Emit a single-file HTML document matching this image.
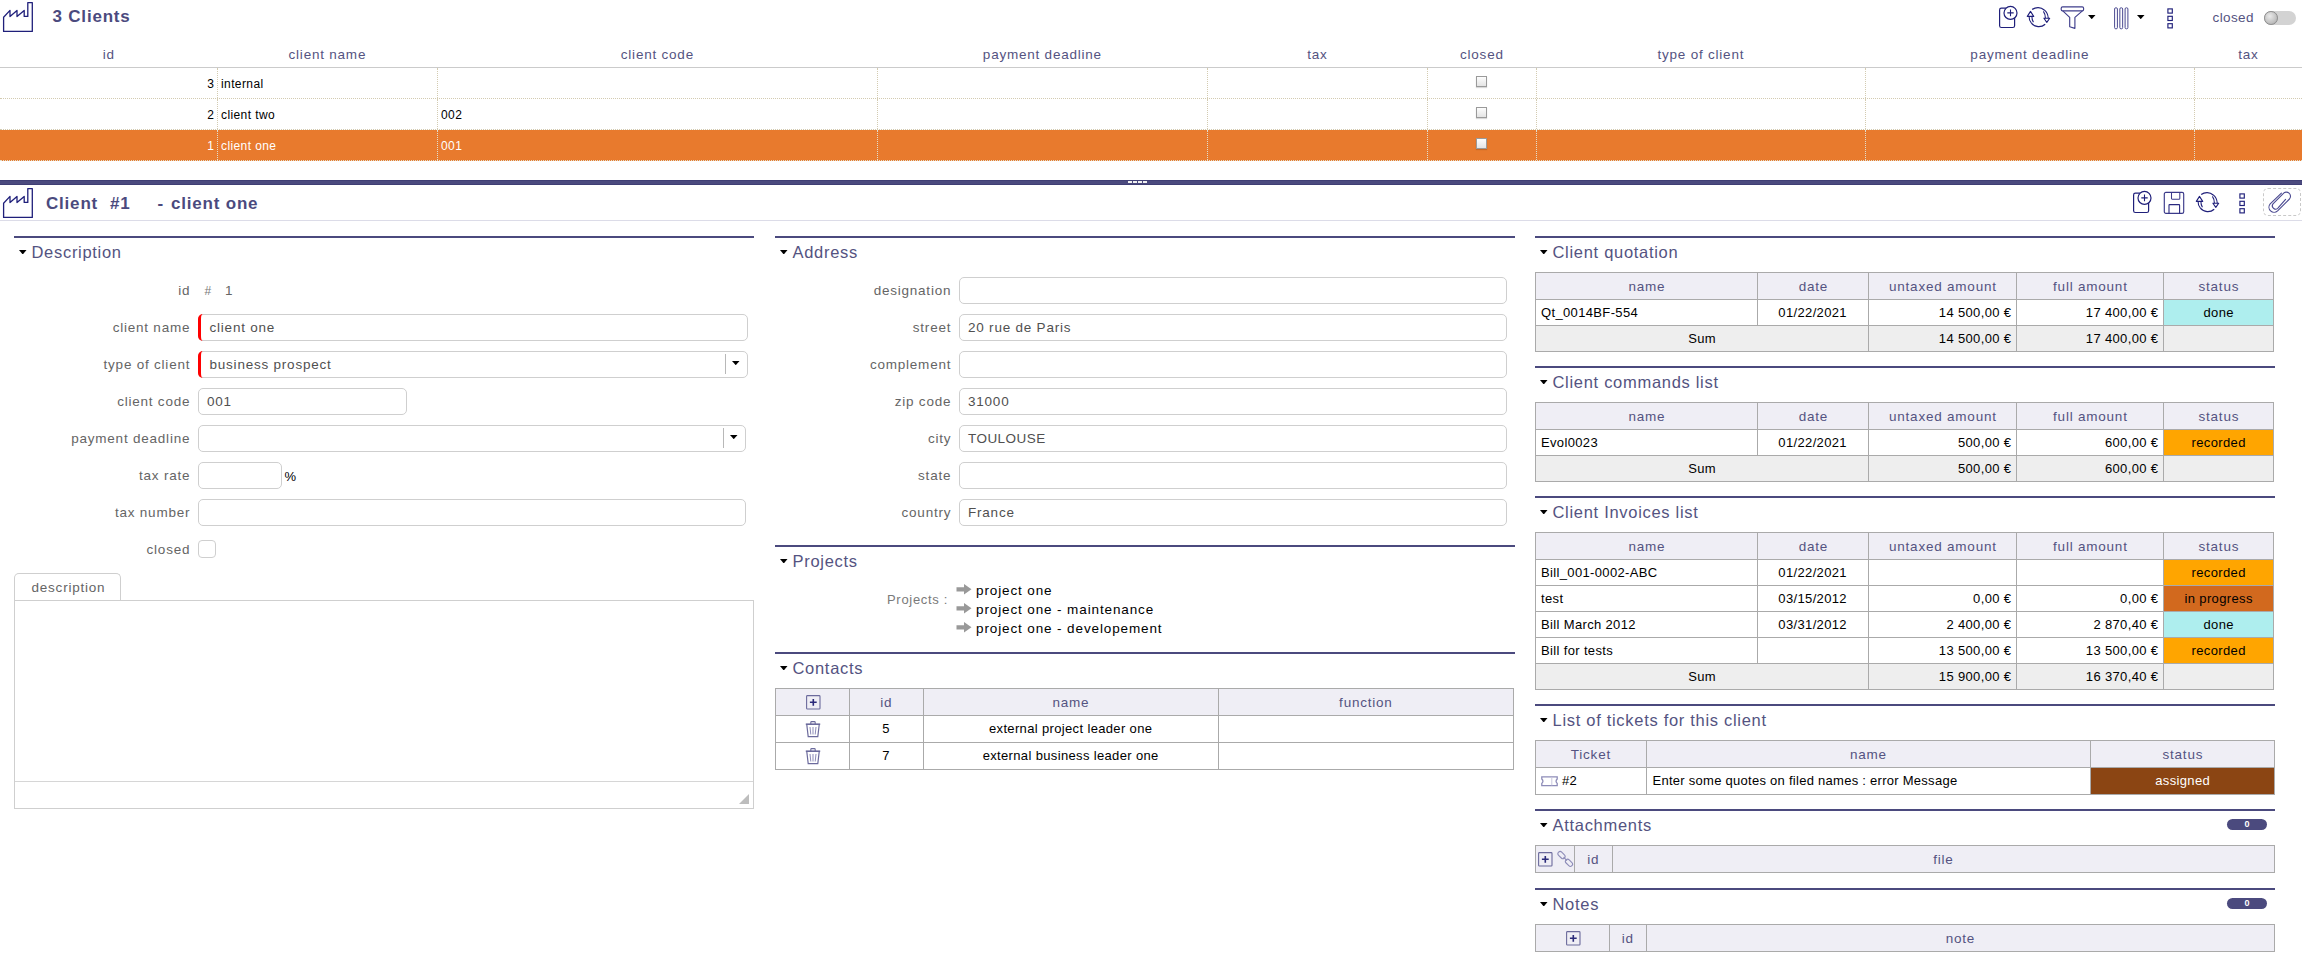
<!DOCTYPE html>
<html><head><meta charset="utf-8"><title>Clients</title>
<style>
html,body{margin:0;padding:0;}
body{width:2302px;height:972px;overflow:hidden;position:relative;background:#fff;font-family:"Liberation Sans",sans-serif;}
.t{position:absolute;white-space:pre;}
.r{position:absolute;}
</style></head><body>
<svg class="r" style="left:0px;top:0px;" width="36" height="36" viewBox="0 0 36 36"><path d="M3.6 31.4 V17.2 L10 10.4 V16.6 L17 10.4 V16.6 L24.2 10.4 V16.4 H27.8 V2.6 H32.3 V31.4 Z" fill="none" stroke="#1f1f7a" stroke-width="1.3" stroke-linejoin="round"/></svg>
<div class="t" style="top:5.71px;font-size:17px;line-height:22px;letter-spacing:0.8px;color:#4b4a7e;font-weight:700;left:52.50px;">3 Clients</div>
<svg class="r" style="left:1998px;top:2px;" width="24" height="28" viewBox="0 0 24 28">
<rect x="1.6" y="6.1" width="15" height="19.4" rx="1.8" fill="none" stroke="#1f1f7a" stroke-width="1.2"/>
<circle cx="12.5" cy="10.9" r="6.5" fill="#fff" stroke="#1f1f7a" stroke-width="1.2"/>
<path d="M12.5 7.6 V14.2 M9.3 10.9 H15.7" stroke="#1f1f7a" stroke-width="1.1"/></svg>
<svg class="r" style="left:2024.0px;top:3.0px;" width="30" height="28" viewBox="0 0 30 28">
<path d="M8.2 6.5 A9.6 9.6 0 0 1 20.2 6.9" fill="none" stroke="#1f1f7a" stroke-width="1.3"/>
<path d="M20.2 6.9 Q23.8 9.6 24.3 15.2 M19.4 8.3 Q21.4 11 21.4 15.2" fill="none" stroke="#1f1f7a" stroke-width="1.1"/>
<path d="M19.9 15.3 H25.7 L22.8 19.4 Z" fill="none" stroke="#1f1f7a" stroke-width="1.1" stroke-linejoin="round"/>
<path d="M21.2 21.3 A9.6 9.6 0 0 1 7.4 20.2" fill="none" stroke="#1f1f7a" stroke-width="1.3"/>
<path d="M7.4 20.2 Q4.9 17.6 5.1 13.4 M9.4 19.2 Q7.9 16.8 7.9 13.4" fill="none" stroke="#1f1f7a" stroke-width="1.1"/>
<path d="M3.3 13.4 H9.7 L6.5 8.4 Z" fill="none" stroke="#1f1f7a" stroke-width="1.1" stroke-linejoin="round"/></svg>
<svg class="r" style="left:2060px;top:5px;" width="26" height="26" viewBox="0 0 26 26">
<rect x="1.2" y="1.9" width="22.4" height="3.9" rx="1.4" fill="none" stroke="#3f3e8c" stroke-width="1.15"/>
<path d="M2.8 5.9 L9.7 12.4 V21.7 L14.9 23.4 V12.4 L22.4 5.9" fill="none" stroke="#3f3e8c" stroke-width="1.15" stroke-linejoin="round"/></svg>
<svg class="r" style="left:2088px;top:15px;" width="7.5" height="4.199999999999999" viewBox="0 0 7.5 4.199999999999999"><path d="M0 0 H7.5 L3.75 4.199999999999999 Z" fill="#000"/></svg>
<svg class="r" style="left:2113.5px;top:6.8px;" width="16" height="23" viewBox="0 0 16 23"><rect x="0.6" y="0.8" width="2.8" height="21" rx="1.2" fill="none" stroke="#4a4990" stroke-width="1.0"/><rect x="5.85" y="0.8" width="2.8" height="21" rx="1.2" fill="none" stroke="#4a4990" stroke-width="1.0"/><rect x="11.1" y="0.8" width="2.8" height="21" rx="1.2" fill="none" stroke="#4a4990" stroke-width="1.0"/></svg>
<svg class="r" style="left:2137px;top:15px;" width="7.5" height="4.199999999999999" viewBox="0 0 7.5 4.199999999999999"><path d="M0 0 H7.5 L3.75 4.199999999999999 Z" fill="#000"/></svg>
<svg class="r" style="left:2166.5px;top:7.6px;" width="8" height="22" viewBox="0 0 8 22"><rect x="0.9" y="0.9" width="4.4" height="4.2" fill="none" stroke="#1f1f7a" stroke-width="1.15"/><rect x="0.9" y="8.3" width="4.4" height="4.2" fill="none" stroke="#1f1f7a" stroke-width="1.15"/><rect x="0.9" y="15.700000000000001" width="4.4" height="4.2" fill="none" stroke="#1f1f7a" stroke-width="1.15"/></svg>
<div class="t" style="top:9.02px;font-size:13.5px;line-height:18px;letter-spacing:0.4px;color:#545381;left:2212.50px;">closed</div>
<div class="r" style="left:2264px;top:11px;width:32px;height:14px;background:#d3d3d3;border-radius:7px;"></div>
<div class="r" style="left:2263.8px;top:11.2px;width:11.8px;height:11.8px;border-radius:50%;border:1px solid #8c8c8c;background:radial-gradient(circle at 40% 35%,#eaeaea,#a9a9a9);"></div>
<div class="t" style="top:46.02px;font-size:13.5px;line-height:18px;letter-spacing:0.78px;color:#545381;left:0.39px;width:217px;text-align:center;">id</div>
<div class="t" style="top:46.02px;font-size:13.5px;line-height:18px;letter-spacing:0.78px;color:#545381;left:217.39px;width:220px;text-align:center;">client name</div>
<div class="t" style="top:46.02px;font-size:13.5px;line-height:18px;letter-spacing:0.78px;color:#545381;left:437.39px;width:440px;text-align:center;">client code</div>
<div class="t" style="top:46.02px;font-size:13.5px;line-height:18px;letter-spacing:0.78px;color:#545381;left:877.39px;width:330px;text-align:center;">payment deadline</div>
<div class="t" style="top:46.02px;font-size:13.5px;line-height:18px;letter-spacing:0.78px;color:#545381;left:1207.39px;width:220px;text-align:center;">tax</div>
<div class="t" style="top:46.02px;font-size:13.5px;line-height:18px;letter-spacing:0.78px;color:#545381;left:1427.39px;width:109px;text-align:center;">closed</div>
<div class="t" style="top:46.02px;font-size:13.5px;line-height:18px;letter-spacing:0.78px;color:#545381;left:1536.39px;width:329px;text-align:center;">type of client</div>
<div class="t" style="top:46.02px;font-size:13.5px;line-height:18px;letter-spacing:0.78px;color:#545381;left:1865.39px;width:329px;text-align:center;">payment deadline</div>
<div class="t" style="top:46.02px;font-size:13.5px;line-height:18px;letter-spacing:0.78px;color:#545381;left:2194.39px;width:108px;text-align:center;">tax</div>
<div class="r" style="left:0px;top:67px;width:2302px;height:1px;background:#cbcbcb;"></div>
<div class="r" style="left:0;top:98px;width:2302px;height:0;border-top:1px dotted #d3cbb1;"></div>
<div class="r" style="left:217px;top:68px;width:0;height:30px;border-left:1px dotted #d3cbb1;"></div>
<div class="r" style="left:437px;top:68px;width:0;height:30px;border-left:1px dotted #d3cbb1;"></div>
<div class="r" style="left:877px;top:68px;width:0;height:30px;border-left:1px dotted #d3cbb1;"></div>
<div class="r" style="left:1207px;top:68px;width:0;height:30px;border-left:1px dotted #d3cbb1;"></div>
<div class="r" style="left:1427px;top:68px;width:0;height:30px;border-left:1px dotted #d3cbb1;"></div>
<div class="r" style="left:1536px;top:68px;width:0;height:30px;border-left:1px dotted #d3cbb1;"></div>
<div class="r" style="left:1865px;top:68px;width:0;height:30px;border-left:1px dotted #d3cbb1;"></div>
<div class="r" style="left:2194px;top:68px;width:0;height:30px;border-left:1px dotted #d3cbb1;"></div>
<div class="t" style="top:75.64px;font-size:12px;line-height:16px;letter-spacing:0.4px;color:#000;left:114.40px;width:100px;text-align:right;">3</div>
<div class="t" style="top:75.64px;font-size:12px;line-height:16px;letter-spacing:0.4px;color:#000;left:221.00px;">internal</div>
<div class="r" style="left:1476px;top:76px;width:11px;height:11px;box-sizing:border-box;border:1px solid #9a9a9a;background:linear-gradient(#fdfdfd,#e4e4e4);box-shadow:0 1px 1px rgba(0,0,0,.15);"></div>
<div class="r" style="left:0;top:129px;width:2302px;height:0;border-top:1px dotted #d3cbb1;"></div>
<div class="r" style="left:217px;top:99px;width:0;height:30px;border-left:1px dotted #d3cbb1;"></div>
<div class="r" style="left:437px;top:99px;width:0;height:30px;border-left:1px dotted #d3cbb1;"></div>
<div class="r" style="left:877px;top:99px;width:0;height:30px;border-left:1px dotted #d3cbb1;"></div>
<div class="r" style="left:1207px;top:99px;width:0;height:30px;border-left:1px dotted #d3cbb1;"></div>
<div class="r" style="left:1427px;top:99px;width:0;height:30px;border-left:1px dotted #d3cbb1;"></div>
<div class="r" style="left:1536px;top:99px;width:0;height:30px;border-left:1px dotted #d3cbb1;"></div>
<div class="r" style="left:1865px;top:99px;width:0;height:30px;border-left:1px dotted #d3cbb1;"></div>
<div class="r" style="left:2194px;top:99px;width:0;height:30px;border-left:1px dotted #d3cbb1;"></div>
<div class="t" style="top:106.64px;font-size:12px;line-height:16px;letter-spacing:0.4px;color:#000;left:114.40px;width:100px;text-align:right;">2</div>
<div class="t" style="top:106.64px;font-size:12px;line-height:16px;letter-spacing:0.4px;color:#000;left:221.00px;">client two</div>
<div class="t" style="top:106.64px;font-size:12px;line-height:16px;letter-spacing:0.4px;color:#000;left:441.00px;">002</div>
<div class="r" style="left:1476px;top:107px;width:11px;height:11px;box-sizing:border-box;border:1px solid #9a9a9a;background:linear-gradient(#fdfdfd,#e4e4e4);box-shadow:0 1px 1px rgba(0,0,0,.15);"></div>
<div class="r" style="left:0px;top:130px;width:2302px;height:31px;background:#e87a2d;"></div>
<div class="r" style="left:0;top:160px;width:2302px;height:0;border-top:1px dotted #e2ddcc;"></div>
<div class="r" style="left:217px;top:130px;width:0;height:30px;border-left:1px dotted #e2ddcc;"></div>
<div class="r" style="left:437px;top:130px;width:0;height:30px;border-left:1px dotted #e2ddcc;"></div>
<div class="r" style="left:877px;top:130px;width:0;height:30px;border-left:1px dotted #e2ddcc;"></div>
<div class="r" style="left:1207px;top:130px;width:0;height:30px;border-left:1px dotted #e2ddcc;"></div>
<div class="r" style="left:1427px;top:130px;width:0;height:30px;border-left:1px dotted #e2ddcc;"></div>
<div class="r" style="left:1536px;top:130px;width:0;height:30px;border-left:1px dotted #e2ddcc;"></div>
<div class="r" style="left:1865px;top:130px;width:0;height:30px;border-left:1px dotted #e2ddcc;"></div>
<div class="r" style="left:2194px;top:130px;width:0;height:30px;border-left:1px dotted #e2ddcc;"></div>
<div class="t" style="top:137.64px;font-size:12px;line-height:16px;letter-spacing:0.4px;color:#fff;left:114.40px;width:100px;text-align:right;">1</div>
<div class="t" style="top:137.64px;font-size:12px;line-height:16px;letter-spacing:0.4px;color:#fff;left:221.00px;">client one</div>
<div class="t" style="top:137.64px;font-size:12px;line-height:16px;letter-spacing:0.4px;color:#fff;left:441.00px;">001</div>
<div class="r" style="left:1476px;top:138px;width:11px;height:11px;box-sizing:border-box;border:1px solid #9a9a9a;background:linear-gradient(#fdfdfd,#e4e4e4);box-shadow:0 1px 1px rgba(0,0,0,.15);"></div>
<div class="r" style="left:0px;top:180px;width:2302px;height:5px;background:#4b4a7e;"></div>
<div class="r" style="left:0px;top:180px;width:2302px;height:1px;background:#3f3e74;"></div>
<div class="r" style="left:0px;top:184px;width:2302px;height:1px;background:#3f3e74;"></div>
<div class="r" style="left:1128px;top:181px;width:4px;height:2px;background:#f2f2f2;"></div>
<div class="r" style="left:1133px;top:181px;width:4px;height:2px;background:#f2f2f2;"></div>
<div class="r" style="left:1138px;top:181px;width:4px;height:2px;background:#f2f2f2;"></div>
<div class="r" style="left:1143px;top:181px;width:4px;height:2px;background:#f2f2f2;"></div>
<svg class="r" style="left:0px;top:186px;" width="36" height="36" viewBox="0 0 36 36"><path d="M3.6 31.4 V17.2 L10 10.4 V16.6 L17 10.4 V16.6 L24.2 10.4 V16.4 H27.8 V2.6 H32.3 V31.4 Z" fill="none" stroke="#1f1f7a" stroke-width="1.3" stroke-linejoin="round"/></svg>
<div class="t" style="top:192.51px;font-size:17px;line-height:22px;letter-spacing:0.8px;color:#4b4a7e;font-weight:700;left:46.00px;">Client</div>
<div class="t" style="top:192.51px;font-size:17px;line-height:22px;letter-spacing:0.8px;color:#4b4a7e;font-weight:700;left:110.00px;">#1</div>
<div class="t" style="top:192.51px;font-size:17px;line-height:22px;letter-spacing:0.8px;color:#4b4a7e;font-weight:700;left:157.50px;">-</div>
<div class="t" style="top:192.51px;font-size:17px;line-height:22px;letter-spacing:0.8px;color:#4b4a7e;font-weight:700;left:171.00px;">client one</div>
<svg class="r" style="left:2132px;top:187px;" width="24" height="28" viewBox="0 0 24 28">
<rect x="1.6" y="6.1" width="15" height="19.4" rx="1.8" fill="none" stroke="#1f1f7a" stroke-width="1.2"/>
<circle cx="12.5" cy="10.9" r="6.5" fill="#fff" stroke="#1f1f7a" stroke-width="1.2"/>
<path d="M12.5 7.6 V14.2 M9.3 10.9 H15.7" stroke="#1f1f7a" stroke-width="1.1"/></svg>
<svg class="r" style="left:2163px;top:191px;" width="23" height="24" viewBox="0 0 23 24">
<rect x="1.3" y="1.4" width="19.4" height="21" rx="1.6" fill="none" stroke="#3b3a8a" stroke-width="1.15"/>
<path d="M8.5 1.4 V7.6 Q8.5 8.2 9.1 8.2 H16.2 Q16.8 8.2 16.8 7.6 V1.4" fill="none" stroke="#3b3a8a" stroke-width="1.05"/>
<path d="M6 22.4 V14.2 Q6 13.6 6.6 13.6 H16 Q16.6 13.6 16.6 14.2 V22.4" fill="none" stroke="#2a2980" stroke-width="1.1"/></svg>
<svg class="r" style="left:2193.0px;top:188.1px;" width="30" height="28" viewBox="0 0 30 28">
<path d="M8.2 6.5 A9.6 9.6 0 0 1 20.2 6.9" fill="none" stroke="#1f1f7a" stroke-width="1.3"/>
<path d="M20.2 6.9 Q23.8 9.6 24.3 15.2 M19.4 8.3 Q21.4 11 21.4 15.2" fill="none" stroke="#1f1f7a" stroke-width="1.1"/>
<path d="M19.9 15.3 H25.7 L22.8 19.4 Z" fill="none" stroke="#1f1f7a" stroke-width="1.1" stroke-linejoin="round"/>
<path d="M21.2 21.3 A9.6 9.6 0 0 1 7.4 20.2" fill="none" stroke="#1f1f7a" stroke-width="1.3"/>
<path d="M7.4 20.2 Q4.9 17.6 5.1 13.4 M9.4 19.2 Q7.9 16.8 7.9 13.4" fill="none" stroke="#1f1f7a" stroke-width="1.1"/>
<path d="M3.3 13.4 H9.7 L6.5 8.4 Z" fill="none" stroke="#1f1f7a" stroke-width="1.1" stroke-linejoin="round"/></svg>
<svg class="r" style="left:2238.5px;top:192.5px;" width="8" height="22" viewBox="0 0 8 22"><rect x="0.9" y="0.9" width="4.4" height="4.2" fill="none" stroke="#1f1f7a" stroke-width="1.15"/><rect x="0.9" y="8.3" width="4.4" height="4.2" fill="none" stroke="#1f1f7a" stroke-width="1.15"/><rect x="0.9" y="15.700000000000001" width="4.4" height="4.2" fill="none" stroke="#1f1f7a" stroke-width="1.15"/></svg>
<div class="r" style="left:2263px;top:188px;width:38px;height:28px;box-sizing:border-box;border:1px dashed #c9c9c9;border-radius:5px;"></div>
<svg class="r" style="left:2266px;top:189px;" width="30" height="26" viewBox="0 0 30 26"><path d="M15.4 4.2 L4.2 14.9 A5.1 5.1 0 0 0 11.6 21.9 L23.5 10 A3.9 3.9 0 0 0 17.2 4.6 L7 14.9 A3 3 0 0 0 12.3 18.7 L19.6 10.3" fill="none" stroke="#4a4990" stroke-width="1.1" stroke-linecap="round" stroke-linejoin="round"/></svg>
<div class="r" style="left:0px;top:220px;width:2302px;height:1px;background:#dcdce8;"></div>
<div class="r" style="left:14px;top:236px;width:740px;height:2px;background:#4b4a7e;"></div>
<svg class="r" style="left:19px;top:249.7px;" width="7.5" height="4.5" viewBox="0 0 7.5 4.5"><path d="M0 0 H7.5 L3.75 4.5 Z" fill="#000"/></svg>
<div class="t" style="top:241.68px;font-size:16.5px;line-height:21px;letter-spacing:0.7px;color:#545381;left:31.50px;">Description</div>
<div class="t" style="top:281.92px;font-size:13.5px;line-height:18px;letter-spacing:0.78px;color:#656565;left:10.28px;width:180px;text-align:right;">id</div>
<div class="t" style="top:318.92px;font-size:13.5px;line-height:18px;letter-spacing:0.78px;color:#656565;left:10.28px;width:180px;text-align:right;">client name</div>
<div class="t" style="top:355.92px;font-size:13.5px;line-height:18px;letter-spacing:0.78px;color:#656565;left:10.28px;width:180px;text-align:right;">type of client</div>
<div class="t" style="top:392.92px;font-size:13.5px;line-height:18px;letter-spacing:0.78px;color:#656565;left:10.28px;width:180px;text-align:right;">client code</div>
<div class="t" style="top:429.92px;font-size:13.5px;line-height:18px;letter-spacing:0.78px;color:#656565;left:10.28px;width:180px;text-align:right;">payment deadline</div>
<div class="t" style="top:466.92px;font-size:13.5px;line-height:18px;letter-spacing:0.78px;color:#656565;left:10.28px;width:180px;text-align:right;">tax rate</div>
<div class="t" style="top:503.92px;font-size:13.5px;line-height:18px;letter-spacing:0.78px;color:#656565;left:10.28px;width:180px;text-align:right;">tax number</div>
<div class="t" style="top:540.92px;font-size:13.5px;line-height:18px;letter-spacing:0.78px;color:#656565;left:10.28px;width:180px;text-align:right;">closed</div>
<div class="t" style="top:283.44px;font-size:12px;line-height:16px;letter-spacing:0.78px;color:#7a7a7a;left:204.50px;">#</div>
<div class="t" style="top:281.92px;font-size:13.5px;line-height:18px;letter-spacing:0.78px;color:#656565;left:225.00px;">1</div>
<div class="r" style="left:198px;top:314px;width:550px;height:26.5px;box-sizing:border-box;border:1px solid #cfcfcf;border-radius:5px;background:#fff;"></div>
<div class="r" style="left:198px;top:314px;width:12px;height:26.5px;box-sizing:border-box;border-left:3px solid #ff0000;border-radius:5px 0 0 5px;"></div>
<div class="t" style="top:319.02px;font-size:13.5px;line-height:18px;letter-spacing:0.78px;color:#505050;left:209.50px;">client one</div>
<div class="r" style="left:198px;top:351px;width:550px;height:26.5px;box-sizing:border-box;border:1px solid #cfcfcf;border-radius:5px;background:#fff;"></div>
<div class="r" style="left:198px;top:351px;width:12px;height:26.5px;box-sizing:border-box;border-left:3px solid #ff0000;border-radius:5px 0 0 5px;"></div>
<div class="r" style="left:725px;top:354px;width:1px;height:20px;background:#b8b8b8;"></div>
<svg class="r" style="left:732px;top:361px;" width="7.5" height="4.199999999999989" viewBox="0 0 7.5 4.199999999999989"><path d="M0 0 H7.5 L3.75 4.199999999999989 Z" fill="#000"/></svg>
<div class="t" style="top:356.02px;font-size:13.5px;line-height:18px;letter-spacing:0.78px;color:#505050;left:209.50px;">business prospect</div>
<div class="r" style="left:198px;top:388px;width:209px;height:26.5px;box-sizing:border-box;border:1px solid #cfcfcf;border-radius:5px;background:#fff;"></div>
<div class="t" style="top:393.02px;font-size:13.5px;line-height:18px;letter-spacing:0.78px;color:#505050;left:207.00px;">001</div>
<div class="r" style="left:198px;top:425px;width:548px;height:26.5px;box-sizing:border-box;border:1px solid #cfcfcf;border-radius:5px;background:#fff;"></div>
<div class="r" style="left:723px;top:428px;width:1px;height:20px;background:#b8b8b8;"></div>
<svg class="r" style="left:730px;top:435px;" width="7.5" height="4.199999999999989" viewBox="0 0 7.5 4.199999999999989"><path d="M0 0 H7.5 L3.75 4.199999999999989 Z" fill="#000"/></svg>
<div class="r" style="left:198px;top:462px;width:84px;height:26.5px;box-sizing:border-box;border:1px solid #cfcfcf;border-radius:5px;background:#fff;"></div>
<div class="t" style="top:468.19px;font-size:13px;line-height:17px;letter-spacing:0.35px;color:#000;left:284.50px;">%</div>
<div class="r" style="left:198px;top:499px;width:548px;height:26.5px;box-sizing:border-box;border:1px solid #cfcfcf;border-radius:5px;background:#fff;"></div>
<div class="r" style="left:198px;top:540px;width:18px;height:18px;box-sizing:border-box;border:1px solid #cfcfcf;border-radius:4px;"></div>
<div class="r" style="left:14px;top:573px;width:107px;height:28px;box-sizing:border-box;border:1px solid #cfcfcf;border-bottom:none;border-radius:5px 5px 0 0;background:#fff;"></div>
<div class="t" style="top:578.92px;font-size:13.5px;line-height:18px;letter-spacing:0.78px;color:#656565;left:31.50px;">description</div>
<div class="r" style="left:14px;top:600px;width:740px;height:209px;box-sizing:border-box;border:1px solid #cfcfcf;"></div>
<div class="r" style="left:15px;top:781px;width:738px;height:1px;background:#d6d6d6;"></div>
<svg class="r" style="left:738px;top:793px;" width="12" height="12" viewBox="0 0 12 12"><path d="M11 1 L11 11 L1 11 Z" fill="#bdbdbd"/></svg>
<div class="r" style="left:775px;top:236px;width:740px;height:2px;background:#4b4a7e;"></div>
<svg class="r" style="left:780px;top:249.7px;" width="7.5" height="4.5" viewBox="0 0 7.5 4.5"><path d="M0 0 H7.5 L3.75 4.5 Z" fill="#000"/></svg>
<div class="t" style="top:241.68px;font-size:16.5px;line-height:21px;letter-spacing:0.7px;color:#545381;left:792.50px;">Address</div>
<div class="t" style="top:281.92px;font-size:13.5px;line-height:18px;letter-spacing:0.78px;color:#656565;left:751.28px;width:200px;text-align:right;">designation</div>
<div class="r" style="left:959px;top:277px;width:548px;height:26.5px;box-sizing:border-box;border:1px solid #cfcfcf;border-radius:5px;background:#fff;"></div>
<div class="t" style="top:318.92px;font-size:13.5px;line-height:18px;letter-spacing:0.78px;color:#656565;left:751.28px;width:200px;text-align:right;">street</div>
<div class="r" style="left:959px;top:314px;width:548px;height:26.5px;box-sizing:border-box;border:1px solid #cfcfcf;border-radius:5px;background:#fff;"></div>
<div class="t" style="top:319.02px;font-size:13.5px;line-height:18px;letter-spacing:0.78px;color:#505050;left:968.00px;">20 rue de Paris</div>
<div class="t" style="top:355.92px;font-size:13.5px;line-height:18px;letter-spacing:0.78px;color:#656565;left:751.28px;width:200px;text-align:right;">complement</div>
<div class="r" style="left:959px;top:351px;width:548px;height:26.5px;box-sizing:border-box;border:1px solid #cfcfcf;border-radius:5px;background:#fff;"></div>
<div class="t" style="top:392.92px;font-size:13.5px;line-height:18px;letter-spacing:0.78px;color:#656565;left:751.28px;width:200px;text-align:right;">zip code</div>
<div class="r" style="left:959px;top:388px;width:548px;height:26.5px;box-sizing:border-box;border:1px solid #cfcfcf;border-radius:5px;background:#fff;"></div>
<div class="t" style="top:393.02px;font-size:13.5px;line-height:18px;letter-spacing:0.78px;color:#505050;left:968.00px;">31000</div>
<div class="t" style="top:429.92px;font-size:13.5px;line-height:18px;letter-spacing:0.78px;color:#656565;left:751.28px;width:200px;text-align:right;">city</div>
<div class="r" style="left:959px;top:425px;width:548px;height:26.5px;box-sizing:border-box;border:1px solid #cfcfcf;border-radius:5px;background:#fff;"></div>
<div class="t" style="top:430.02px;font-size:13.5px;line-height:18px;letter-spacing:0.45px;color:#505050;left:968.00px;">TOULOUSE</div>
<div class="t" style="top:466.92px;font-size:13.5px;line-height:18px;letter-spacing:0.78px;color:#656565;left:751.28px;width:200px;text-align:right;">state</div>
<div class="r" style="left:959px;top:462px;width:548px;height:26.5px;box-sizing:border-box;border:1px solid #cfcfcf;border-radius:5px;background:#fff;"></div>
<div class="t" style="top:503.92px;font-size:13.5px;line-height:18px;letter-spacing:0.78px;color:#656565;left:751.28px;width:200px;text-align:right;">country</div>
<div class="r" style="left:959px;top:499px;width:548px;height:26.5px;box-sizing:border-box;border:1px solid #cfcfcf;border-radius:5px;background:#fff;"></div>
<div class="t" style="top:504.02px;font-size:13.5px;line-height:18px;letter-spacing:0.78px;color:#505050;left:968.00px;">France</div>
<div class="r" style="left:775px;top:545px;width:740px;height:2px;background:#4b4a7e;"></div>
<svg class="r" style="left:780px;top:558.7px;" width="7.5" height="4.5" viewBox="0 0 7.5 4.5"><path d="M0 0 H7.5 L3.75 4.5 Z" fill="#000"/></svg>
<div class="t" style="top:550.68px;font-size:16.5px;line-height:21px;letter-spacing:0.7px;color:#545381;left:792.50px;">Projects</div>
<div class="t" style="top:590.79px;font-size:13px;line-height:17px;letter-spacing:0.7px;color:#7a7a7a;left:887.00px;">Projects :</div>
<svg class="r" style="left:955.5px;top:583.7px;" width="16" height="11" viewBox="0 0 16 11"><path d="M0.5 3.3 H8 V0 L15.5 5.3 L8 10.6 V7.6 H0.5 Z" fill="#999"/></svg>
<div class="t" style="top:581.82px;font-size:13.5px;line-height:18px;letter-spacing:0.88px;color:#000;left:976.00px;">project one</div>
<svg class="r" style="left:955.5px;top:602.7px;" width="16" height="11" viewBox="0 0 16 11"><path d="M0.5 3.3 H8 V0 L15.5 5.3 L8 10.6 V7.6 H0.5 Z" fill="#999"/></svg>
<div class="t" style="top:600.82px;font-size:13.5px;line-height:18px;letter-spacing:0.88px;color:#000;left:976.00px;">project one - maintenance</div>
<svg class="r" style="left:955.5px;top:621.7px;" width="16" height="11" viewBox="0 0 16 11"><path d="M0.5 3.3 H8 V0 L15.5 5.3 L8 10.6 V7.6 H0.5 Z" fill="#999"/></svg>
<div class="t" style="top:619.82px;font-size:13.5px;line-height:18px;letter-spacing:0.88px;color:#000;left:976.00px;">project one - developement</div>
<div class="r" style="left:775px;top:652px;width:740px;height:2px;background:#4b4a7e;"></div>
<svg class="r" style="left:780px;top:665.7px;" width="7.5" height="4.5" viewBox="0 0 7.5 4.5"><path d="M0 0 H7.5 L3.75 4.5 Z" fill="#000"/></svg>
<div class="t" style="top:657.68px;font-size:16.5px;line-height:21px;letter-spacing:0.7px;color:#545381;left:792.50px;">Contacts</div>
<div class="r" style="left:775px;top:688px;width:75px;height:28px;background:#efeef5;"></div>
<div class="r" style="left:849px;top:688px;width:75px;height:28px;background:#efeef5;"></div>
<div class="r" style="left:923px;top:688px;width:296px;height:28px;background:#efeef5;"></div>
<div class="r" style="left:1218px;top:688px;width:296px;height:28px;background:#efeef5;"></div>
<div class="r" style="left:775px;top:688px;width:739px;height:1px;background:#aaaaaa;"></div>
<div class="r" style="left:775px;top:715px;width:739px;height:1px;background:#aaaaaa;"></div>
<div class="r" style="left:775px;top:742px;width:739px;height:1px;background:#aaaaaa;"></div>
<div class="r" style="left:775px;top:769px;width:739px;height:1px;background:#aaaaaa;"></div>
<div class="r" style="left:775px;top:688px;width:1px;height:82px;background:#aaaaaa;"></div>
<div class="r" style="left:849px;top:688px;width:1px;height:82px;background:#aaaaaa;"></div>
<div class="r" style="left:923px;top:688px;width:1px;height:82px;background:#aaaaaa;"></div>
<div class="r" style="left:1218px;top:688px;width:1px;height:82px;background:#aaaaaa;"></div>
<div class="r" style="left:1513px;top:688px;width:1px;height:82px;background:#aaaaaa;"></div>
<svg class="r" style="left:805.5px;top:694.6px;" width="15" height="15" viewBox="0 0 15 15"><rect x="0.6" y="0.6" width="13.4" height="13.4" rx="0.8" fill="none" stroke="#6b6a9c" stroke-width="1.1"/><path d="M7.3 3.9 V10.7 M3.9 7.3 H10.7" stroke="#2b2a7a" stroke-width="1.6"/></svg>
<div class="t" style="top:694.32px;font-size:13.5px;line-height:18px;letter-spacing:0.78px;color:#545381;left:851.39px;width:70px;text-align:center;">id</div>
<div class="t" style="top:694.32px;font-size:13.5px;line-height:18px;letter-spacing:0.78px;color:#545381;left:925.89px;width:290px;text-align:center;">name</div>
<div class="t" style="top:694.32px;font-size:13.5px;line-height:18px;letter-spacing:0.78px;color:#545381;left:1220.89px;width:290px;text-align:center;">function</div>
<svg class="r" style="left:805px;top:721px;" width="16" height="17" viewBox="0 0 16 17"><path d="M0.8 3.2 H15.2" stroke="#6b6a9c" stroke-width="1.6"/>
<path d="M5.8 3 V1.4 Q5.8 0.6 6.6 0.6 H9.4 Q10.2 0.6 10.2 1.4 V3" fill="none" stroke="#6b6a9c" stroke-width="1.1"/>
<path d="M1.8 3.8 L3.2 15.6 H12.8 L14.2 3.8" fill="none" stroke="#6b6a9c" stroke-width="1.2"/>
<path d="M5 6 L5.8 13.5 M8 6 V13.5 M11 6 L10.2 13.5" stroke="#8d8cb8" stroke-width="1"/></svg>
<div class="t" style="top:720.29px;font-size:13px;line-height:17px;letter-spacing:0.35px;color:#000;left:851.17px;width:70px;text-align:center;">5</div>
<div class="t" style="top:720.29px;font-size:13px;line-height:17px;letter-spacing:0.35px;color:#000;left:925.67px;width:290px;text-align:center;">external project leader one</div>
<svg class="r" style="left:805px;top:748px;" width="16" height="17" viewBox="0 0 16 17"><path d="M0.8 3.2 H15.2" stroke="#6b6a9c" stroke-width="1.6"/>
<path d="M5.8 3 V1.4 Q5.8 0.6 6.6 0.6 H9.4 Q10.2 0.6 10.2 1.4 V3" fill="none" stroke="#6b6a9c" stroke-width="1.1"/>
<path d="M1.8 3.8 L3.2 15.6 H12.8 L14.2 3.8" fill="none" stroke="#6b6a9c" stroke-width="1.2"/>
<path d="M5 6 L5.8 13.5 M8 6 V13.5 M11 6 L10.2 13.5" stroke="#8d8cb8" stroke-width="1"/></svg>
<div class="t" style="top:747.29px;font-size:13px;line-height:17px;letter-spacing:0.35px;color:#000;left:851.17px;width:70px;text-align:center;">7</div>
<div class="t" style="top:747.29px;font-size:13px;line-height:17px;letter-spacing:0.35px;color:#000;left:925.67px;width:290px;text-align:center;">external business leader one</div>
<div class="r" style="left:1535px;top:236px;width:740px;height:2px;background:#4b4a7e;"></div>
<svg class="r" style="left:1540px;top:249.7px;" width="7.5" height="4.5" viewBox="0 0 7.5 4.5"><path d="M0 0 H7.5 L3.75 4.5 Z" fill="#000"/></svg>
<div class="t" style="top:241.68px;font-size:16.5px;line-height:21px;letter-spacing:0.7px;color:#545381;left:1552.50px;">Client quotation</div>
<div class="r" style="left:1535px;top:272px;width:223px;height:28px;background:#efeef5;"></div>
<div class="r" style="left:1757px;top:272px;width:112px;height:28px;background:#efeef5;"></div>
<div class="r" style="left:1868px;top:272px;width:149px;height:28px;background:#efeef5;"></div>
<div class="r" style="left:2016px;top:272px;width:148px;height:28px;background:#efeef5;"></div>
<div class="r" style="left:2163px;top:272px;width:111px;height:28px;background:#efeef5;"></div>
<div class="r" style="left:2163px;top:299px;width:111px;height:27px;background:#aeeeee;"></div>
<div class="r" style="left:1535px;top:325px;width:223px;height:27px;background:#eeeeee;"></div>
<div class="r" style="left:1757px;top:325px;width:112px;height:27px;background:#eeeeee;"></div>
<div class="r" style="left:1868px;top:325px;width:149px;height:27px;background:#eeeeee;"></div>
<div class="r" style="left:2016px;top:325px;width:148px;height:27px;background:#eeeeee;"></div>
<div class="r" style="left:2163px;top:325px;width:111px;height:27px;background:#eeeeee;"></div>
<div class="r" style="left:1535px;top:272px;width:739px;height:1px;background:#aaaaaa;"></div>
<div class="r" style="left:1535px;top:299px;width:739px;height:1px;background:#aaaaaa;"></div>
<div class="r" style="left:1535px;top:325px;width:739px;height:1px;background:#aaaaaa;"></div>
<div class="r" style="left:1535px;top:351px;width:739px;height:1px;background:#aaaaaa;"></div>
<div class="r" style="left:1535px;top:272px;width:1px;height:80px;background:#aaaaaa;"></div>
<div class="r" style="left:1757px;top:272px;width:1px;height:80px;background:#aaaaaa;"></div>
<div class="r" style="left:1868px;top:272px;width:1px;height:80px;background:#aaaaaa;"></div>
<div class="r" style="left:2016px;top:272px;width:1px;height:80px;background:#aaaaaa;"></div>
<div class="r" style="left:2163px;top:272px;width:1px;height:80px;background:#aaaaaa;"></div>
<div class="r" style="left:2273px;top:272px;width:1px;height:80px;background:#aaaaaa;"></div>
<div class="r" style="left:1757px;top:326px;width:1px;height:25px;background:#eeeeee;"></div>
<div class="t" style="top:278.22px;font-size:13.5px;line-height:18px;letter-spacing:0.78px;color:#545381;left:1535.89px;width:222px;text-align:center;">name</div>
<div class="t" style="top:278.22px;font-size:13.5px;line-height:18px;letter-spacing:0.78px;color:#545381;left:1757.89px;width:111px;text-align:center;">date</div>
<div class="t" style="top:278.22px;font-size:13.5px;line-height:18px;letter-spacing:0.78px;color:#545381;left:1868.89px;width:148px;text-align:center;">untaxed amount</div>
<div class="t" style="top:278.22px;font-size:13.5px;line-height:18px;letter-spacing:0.78px;color:#545381;left:2016.89px;width:147px;text-align:center;">full amount</div>
<div class="t" style="top:278.22px;font-size:13.5px;line-height:18px;letter-spacing:0.78px;color:#545381;left:2163.89px;width:110px;text-align:center;">status</div>
<div class="t" style="top:304.49px;font-size:13px;line-height:17px;letter-spacing:0.35px;color:#000;left:1541.00px;">Qt_0014BF-554</div>
<div class="t" style="top:304.49px;font-size:13px;line-height:17px;letter-spacing:0.35px;color:#000;left:1757.67px;width:110px;text-align:center;">01/22/2021</div>
<div class="t" style="top:304.49px;font-size:13px;line-height:17px;letter-spacing:0.35px;color:#000;left:1871.35px;width:140px;text-align:right;">14 500,00 €</div>
<div class="t" style="top:304.49px;font-size:13px;line-height:17px;letter-spacing:0.35px;color:#000;left:2018.35px;width:140px;text-align:right;">17 400,00 €</div>
<div class="t" style="top:304.49px;font-size:13px;line-height:17px;letter-spacing:0.35px;color:#000;left:2163.68px;width:110px;text-align:center;">done</div>
<div class="t" style="top:330.49px;font-size:13px;line-height:17px;letter-spacing:0.35px;color:#000;left:1602.17px;width:200px;text-align:center;">Sum</div>
<div class="t" style="top:330.49px;font-size:13px;line-height:17px;letter-spacing:0.35px;color:#000;left:1871.35px;width:140px;text-align:right;">14 500,00 €</div>
<div class="t" style="top:330.49px;font-size:13px;line-height:17px;letter-spacing:0.35px;color:#000;left:2018.35px;width:140px;text-align:right;">17 400,00 €</div>
<div class="r" style="left:1535px;top:366px;width:740px;height:2px;background:#4b4a7e;"></div>
<svg class="r" style="left:1540px;top:379.7px;" width="7.5" height="4.5" viewBox="0 0 7.5 4.5"><path d="M0 0 H7.5 L3.75 4.5 Z" fill="#000"/></svg>
<div class="t" style="top:371.68px;font-size:16.5px;line-height:21px;letter-spacing:0.7px;color:#545381;left:1552.50px;">Client commands list</div>
<div class="r" style="left:1535px;top:402px;width:223px;height:28px;background:#efeef5;"></div>
<div class="r" style="left:1757px;top:402px;width:112px;height:28px;background:#efeef5;"></div>
<div class="r" style="left:1868px;top:402px;width:149px;height:28px;background:#efeef5;"></div>
<div class="r" style="left:2016px;top:402px;width:148px;height:28px;background:#efeef5;"></div>
<div class="r" style="left:2163px;top:402px;width:111px;height:28px;background:#efeef5;"></div>
<div class="r" style="left:2163px;top:429px;width:111px;height:27px;background:#ffa500;"></div>
<div class="r" style="left:1535px;top:455px;width:223px;height:27px;background:#eeeeee;"></div>
<div class="r" style="left:1757px;top:455px;width:112px;height:27px;background:#eeeeee;"></div>
<div class="r" style="left:1868px;top:455px;width:149px;height:27px;background:#eeeeee;"></div>
<div class="r" style="left:2016px;top:455px;width:148px;height:27px;background:#eeeeee;"></div>
<div class="r" style="left:2163px;top:455px;width:111px;height:27px;background:#eeeeee;"></div>
<div class="r" style="left:1535px;top:402px;width:739px;height:1px;background:#aaaaaa;"></div>
<div class="r" style="left:1535px;top:429px;width:739px;height:1px;background:#aaaaaa;"></div>
<div class="r" style="left:1535px;top:455px;width:739px;height:1px;background:#aaaaaa;"></div>
<div class="r" style="left:1535px;top:481px;width:739px;height:1px;background:#aaaaaa;"></div>
<div class="r" style="left:1535px;top:402px;width:1px;height:80px;background:#aaaaaa;"></div>
<div class="r" style="left:1757px;top:402px;width:1px;height:80px;background:#aaaaaa;"></div>
<div class="r" style="left:1868px;top:402px;width:1px;height:80px;background:#aaaaaa;"></div>
<div class="r" style="left:2016px;top:402px;width:1px;height:80px;background:#aaaaaa;"></div>
<div class="r" style="left:2163px;top:402px;width:1px;height:80px;background:#aaaaaa;"></div>
<div class="r" style="left:2273px;top:402px;width:1px;height:80px;background:#aaaaaa;"></div>
<div class="r" style="left:1757px;top:456px;width:1px;height:25px;background:#eeeeee;"></div>
<div class="t" style="top:408.22px;font-size:13.5px;line-height:18px;letter-spacing:0.78px;color:#545381;left:1535.89px;width:222px;text-align:center;">name</div>
<div class="t" style="top:408.22px;font-size:13.5px;line-height:18px;letter-spacing:0.78px;color:#545381;left:1757.89px;width:111px;text-align:center;">date</div>
<div class="t" style="top:408.22px;font-size:13.5px;line-height:18px;letter-spacing:0.78px;color:#545381;left:1868.89px;width:148px;text-align:center;">untaxed amount</div>
<div class="t" style="top:408.22px;font-size:13.5px;line-height:18px;letter-spacing:0.78px;color:#545381;left:2016.89px;width:147px;text-align:center;">full amount</div>
<div class="t" style="top:408.22px;font-size:13.5px;line-height:18px;letter-spacing:0.78px;color:#545381;left:2163.89px;width:110px;text-align:center;">status</div>
<div class="t" style="top:434.49px;font-size:13px;line-height:17px;letter-spacing:0.35px;color:#000;left:1541.00px;">Evol0023</div>
<div class="t" style="top:434.49px;font-size:13px;line-height:17px;letter-spacing:0.35px;color:#000;left:1757.67px;width:110px;text-align:center;">01/22/2021</div>
<div class="t" style="top:434.49px;font-size:13px;line-height:17px;letter-spacing:0.35px;color:#000;left:1871.35px;width:140px;text-align:right;">500,00 €</div>
<div class="t" style="top:434.49px;font-size:13px;line-height:17px;letter-spacing:0.35px;color:#000;left:2018.35px;width:140px;text-align:right;">600,00 €</div>
<div class="t" style="top:434.49px;font-size:13px;line-height:17px;letter-spacing:0.35px;color:#000;left:2163.68px;width:110px;text-align:center;">recorded</div>
<div class="t" style="top:460.49px;font-size:13px;line-height:17px;letter-spacing:0.35px;color:#000;left:1602.17px;width:200px;text-align:center;">Sum</div>
<div class="t" style="top:460.49px;font-size:13px;line-height:17px;letter-spacing:0.35px;color:#000;left:1871.35px;width:140px;text-align:right;">500,00 €</div>
<div class="t" style="top:460.49px;font-size:13px;line-height:17px;letter-spacing:0.35px;color:#000;left:2018.35px;width:140px;text-align:right;">600,00 €</div>
<div class="r" style="left:1535px;top:496px;width:740px;height:2px;background:#4b4a7e;"></div>
<svg class="r" style="left:1540px;top:509.7px;" width="7.5" height="4.500000000000057" viewBox="0 0 7.5 4.500000000000057"><path d="M0 0 H7.5 L3.75 4.500000000000057 Z" fill="#000"/></svg>
<div class="t" style="top:501.68px;font-size:16.5px;line-height:21px;letter-spacing:0.7px;color:#545381;left:1552.50px;">Client Invoices list</div>
<div class="r" style="left:1535px;top:532px;width:223px;height:28px;background:#efeef5;"></div>
<div class="r" style="left:1757px;top:532px;width:112px;height:28px;background:#efeef5;"></div>
<div class="r" style="left:1868px;top:532px;width:149px;height:28px;background:#efeef5;"></div>
<div class="r" style="left:2016px;top:532px;width:148px;height:28px;background:#efeef5;"></div>
<div class="r" style="left:2163px;top:532px;width:111px;height:28px;background:#efeef5;"></div>
<div class="r" style="left:2163px;top:559px;width:111px;height:27px;background:#ffa500;"></div>
<div class="r" style="left:2163px;top:585px;width:111px;height:27px;background:#d2691e;"></div>
<div class="r" style="left:2163px;top:611px;width:111px;height:27px;background:#aeeeee;"></div>
<div class="r" style="left:2163px;top:637px;width:111px;height:27px;background:#ffa500;"></div>
<div class="r" style="left:1535px;top:663px;width:223px;height:27px;background:#eeeeee;"></div>
<div class="r" style="left:1757px;top:663px;width:112px;height:27px;background:#eeeeee;"></div>
<div class="r" style="left:1868px;top:663px;width:149px;height:27px;background:#eeeeee;"></div>
<div class="r" style="left:2016px;top:663px;width:148px;height:27px;background:#eeeeee;"></div>
<div class="r" style="left:2163px;top:663px;width:111px;height:27px;background:#eeeeee;"></div>
<div class="r" style="left:1535px;top:532px;width:739px;height:1px;background:#aaaaaa;"></div>
<div class="r" style="left:1535px;top:559px;width:739px;height:1px;background:#aaaaaa;"></div>
<div class="r" style="left:1535px;top:585px;width:739px;height:1px;background:#aaaaaa;"></div>
<div class="r" style="left:1535px;top:611px;width:739px;height:1px;background:#aaaaaa;"></div>
<div class="r" style="left:1535px;top:637px;width:739px;height:1px;background:#aaaaaa;"></div>
<div class="r" style="left:1535px;top:663px;width:739px;height:1px;background:#aaaaaa;"></div>
<div class="r" style="left:1535px;top:689px;width:739px;height:1px;background:#aaaaaa;"></div>
<div class="r" style="left:1535px;top:532px;width:1px;height:158px;background:#aaaaaa;"></div>
<div class="r" style="left:1757px;top:532px;width:1px;height:158px;background:#aaaaaa;"></div>
<div class="r" style="left:1868px;top:532px;width:1px;height:158px;background:#aaaaaa;"></div>
<div class="r" style="left:2016px;top:532px;width:1px;height:158px;background:#aaaaaa;"></div>
<div class="r" style="left:2163px;top:532px;width:1px;height:158px;background:#aaaaaa;"></div>
<div class="r" style="left:2273px;top:532px;width:1px;height:158px;background:#aaaaaa;"></div>
<div class="r" style="left:1757px;top:664px;width:1px;height:25px;background:#eeeeee;"></div>
<div class="t" style="top:538.22px;font-size:13.5px;line-height:18px;letter-spacing:0.78px;color:#545381;left:1535.89px;width:222px;text-align:center;">name</div>
<div class="t" style="top:538.22px;font-size:13.5px;line-height:18px;letter-spacing:0.78px;color:#545381;left:1757.89px;width:111px;text-align:center;">date</div>
<div class="t" style="top:538.22px;font-size:13.5px;line-height:18px;letter-spacing:0.78px;color:#545381;left:1868.89px;width:148px;text-align:center;">untaxed amount</div>
<div class="t" style="top:538.22px;font-size:13.5px;line-height:18px;letter-spacing:0.78px;color:#545381;left:2016.89px;width:147px;text-align:center;">full amount</div>
<div class="t" style="top:538.22px;font-size:13.5px;line-height:18px;letter-spacing:0.78px;color:#545381;left:2163.89px;width:110px;text-align:center;">status</div>
<div class="t" style="top:564.49px;font-size:13px;line-height:17px;letter-spacing:0.35px;color:#000;left:1541.00px;">Bill_001-0002-ABC</div>
<div class="t" style="top:564.49px;font-size:13px;line-height:17px;letter-spacing:0.35px;color:#000;left:1757.67px;width:110px;text-align:center;">01/22/2021</div>
<div class="t" style="top:564.49px;font-size:13px;line-height:17px;letter-spacing:0.35px;color:#000;left:2163.68px;width:110px;text-align:center;">recorded</div>
<div class="t" style="top:590.49px;font-size:13px;line-height:17px;letter-spacing:0.35px;color:#000;left:1541.00px;">test</div>
<div class="t" style="top:590.49px;font-size:13px;line-height:17px;letter-spacing:0.35px;color:#000;left:1757.67px;width:110px;text-align:center;">03/15/2012</div>
<div class="t" style="top:590.49px;font-size:13px;line-height:17px;letter-spacing:0.35px;color:#000;left:1871.35px;width:140px;text-align:right;">0,00 €</div>
<div class="t" style="top:590.49px;font-size:13px;line-height:17px;letter-spacing:0.35px;color:#000;left:2018.35px;width:140px;text-align:right;">0,00 €</div>
<div class="t" style="top:590.49px;font-size:13px;line-height:17px;letter-spacing:0.35px;color:#000;left:2163.68px;width:110px;text-align:center;">in progress</div>
<div class="t" style="top:616.49px;font-size:13px;line-height:17px;letter-spacing:0.35px;color:#000;left:1541.00px;">Bill March 2012</div>
<div class="t" style="top:616.49px;font-size:13px;line-height:17px;letter-spacing:0.35px;color:#000;left:1757.67px;width:110px;text-align:center;">03/31/2012</div>
<div class="t" style="top:616.49px;font-size:13px;line-height:17px;letter-spacing:0.35px;color:#000;left:1871.35px;width:140px;text-align:right;">2 400,00 €</div>
<div class="t" style="top:616.49px;font-size:13px;line-height:17px;letter-spacing:0.35px;color:#000;left:2018.35px;width:140px;text-align:right;">2 870,40 €</div>
<div class="t" style="top:616.49px;font-size:13px;line-height:17px;letter-spacing:0.35px;color:#000;left:2163.68px;width:110px;text-align:center;">done</div>
<div class="t" style="top:642.49px;font-size:13px;line-height:17px;letter-spacing:0.35px;color:#000;left:1541.00px;">Bill for tests</div>
<div class="t" style="top:642.49px;font-size:13px;line-height:17px;letter-spacing:0.35px;color:#000;left:1871.35px;width:140px;text-align:right;">13 500,00 €</div>
<div class="t" style="top:642.49px;font-size:13px;line-height:17px;letter-spacing:0.35px;color:#000;left:2018.35px;width:140px;text-align:right;">13 500,00 €</div>
<div class="t" style="top:642.49px;font-size:13px;line-height:17px;letter-spacing:0.35px;color:#000;left:2163.68px;width:110px;text-align:center;">recorded</div>
<div class="t" style="top:668.49px;font-size:13px;line-height:17px;letter-spacing:0.35px;color:#000;left:1602.17px;width:200px;text-align:center;">Sum</div>
<div class="t" style="top:668.49px;font-size:13px;line-height:17px;letter-spacing:0.35px;color:#000;left:1871.35px;width:140px;text-align:right;">15 900,00 €</div>
<div class="t" style="top:668.49px;font-size:13px;line-height:17px;letter-spacing:0.35px;color:#000;left:2018.35px;width:140px;text-align:right;">16 370,40 €</div>
<div class="r" style="left:1535px;top:704px;width:740px;height:2px;background:#4b4a7e;"></div>
<svg class="r" style="left:1540px;top:717.7px;" width="7.5" height="4.5" viewBox="0 0 7.5 4.5"><path d="M0 0 H7.5 L3.75 4.5 Z" fill="#000"/></svg>
<div class="t" style="top:709.68px;font-size:16.5px;line-height:21px;letter-spacing:0.7px;color:#545381;left:1552.50px;">List of tickets for this client</div>
<div class="r" style="left:1535px;top:740px;width:112px;height:28px;background:#efeef5;"></div>
<div class="r" style="left:1646px;top:740px;width:445px;height:28px;background:#efeef5;"></div>
<div class="r" style="left:2090px;top:740px;width:185px;height:28px;background:#efeef5;"></div>
<div class="r" style="left:2090px;top:767px;width:185px;height:28px;background:#8b4513;"></div>
<div class="r" style="left:1535px;top:740px;width:740px;height:1px;background:#aaaaaa;"></div>
<div class="r" style="left:1535px;top:767px;width:740px;height:1px;background:#aaaaaa;"></div>
<div class="r" style="left:1535px;top:794px;width:740px;height:1px;background:#aaaaaa;"></div>
<div class="r" style="left:1535px;top:740px;width:1px;height:55px;background:#aaaaaa;"></div>
<div class="r" style="left:1646px;top:740px;width:1px;height:55px;background:#aaaaaa;"></div>
<div class="r" style="left:2090px;top:740px;width:1px;height:55px;background:#aaaaaa;"></div>
<div class="r" style="left:2274px;top:740px;width:1px;height:55px;background:#aaaaaa;"></div>
<div class="t" style="top:746.22px;font-size:13.5px;line-height:18px;letter-spacing:0.78px;color:#545381;left:1535.89px;width:110px;text-align:center;">Ticket</div>
<div class="t" style="top:746.22px;font-size:13.5px;line-height:18px;letter-spacing:0.78px;color:#545381;left:1668.39px;width:400px;text-align:center;">name</div>
<div class="t" style="top:746.22px;font-size:13.5px;line-height:18px;letter-spacing:0.78px;color:#545381;left:2092.89px;width:180px;text-align:center;">status</div>
<svg class="r" style="left:1540.5px;top:775.5px;" width="18" height="11" viewBox="0 0 18 11"><path d="M0.8 0.8 H16.2 V3 Q13.9 5.2 16.2 7.4 V9.6 H0.8 V7.4 Q3.1 5.2 0.8 3 Z" fill="none" stroke="#8d8cb8" stroke-width="1.3"/><path d="M10.8 1 V9.4" stroke="#c9c8de" stroke-width="1"/></svg>
<div class="t" style="top:772.29px;font-size:13px;line-height:17px;letter-spacing:0.35px;color:#000;left:1562.00px;">#2</div>
<div class="t" style="top:772.29px;font-size:13px;line-height:17px;letter-spacing:0.27px;color:#000;left:1652.50px;">Enter some quotes on filed names : error Message</div>
<div class="t" style="top:772.29px;font-size:13px;line-height:17px;letter-spacing:0.35px;color:#fff;left:2092.68px;width:180px;text-align:center;">assigned</div>
<div class="r" style="left:1535px;top:809px;width:740px;height:2px;background:#4b4a7e;"></div>
<svg class="r" style="left:1540px;top:822.7px;" width="7.5" height="4.5" viewBox="0 0 7.5 4.5"><path d="M0 0 H7.5 L3.75 4.5 Z" fill="#000"/></svg>
<div class="t" style="top:814.68px;font-size:16.5px;line-height:21px;letter-spacing:0.7px;color:#545381;left:1552.50px;">Attachments</div>
<div class="r" style="left:2227px;top:818.5px;width:40px;height:11.5px;border-radius:6px;background:#4b4a7e;color:#fff;font-size:9px;font-weight:700;line-height:11.5px;text-align:center;">0</div>
<div class="r" style="left:1535px;top:845px;width:40px;height:28px;background:#efeef5;"></div>
<div class="r" style="left:1574px;top:845px;width:39px;height:28px;background:#efeef5;"></div>
<div class="r" style="left:1612px;top:845px;width:663px;height:28px;background:#efeef5;"></div>
<div class="r" style="left:1535px;top:845px;width:740px;height:1px;background:#aaaaaa;"></div>
<div class="r" style="left:1535px;top:872px;width:740px;height:1px;background:#aaaaaa;"></div>
<div class="r" style="left:1535px;top:845px;width:1px;height:28px;background:#aaaaaa;"></div>
<div class="r" style="left:1574px;top:845px;width:1px;height:28px;background:#aaaaaa;"></div>
<div class="r" style="left:1612px;top:845px;width:1px;height:28px;background:#aaaaaa;"></div>
<div class="r" style="left:2274px;top:845px;width:1px;height:28px;background:#aaaaaa;"></div>
<svg class="r" style="left:1538px;top:851.8px;" width="15" height="15" viewBox="0 0 15 15"><rect x="0.6" y="0.6" width="13.4" height="13.4" rx="0.8" fill="none" stroke="#6b6a9c" stroke-width="1.1"/><path d="M7.3 3.9 V10.7 M3.9 7.3 H10.7" stroke="#2b2a7a" stroke-width="1.6"/></svg>
<svg class="r" style="left:1556px;top:850px;" width="18" height="18" viewBox="0 0 18 18"><rect x="1.4" y="2.9" width="8.2" height="4.4" rx="2.2" transform="rotate(45 5.5 5.1)" fill="none" stroke="#8d8cb8" stroke-width="1.1"/><rect x="8.9" y="10.6" width="8.2" height="4.4" rx="2.2" transform="rotate(45 13 12.8)" fill="none" stroke="#8d8cb8" stroke-width="1.1"/><path d="M7.6 7.2 L10.9 10.7" stroke="#8d8cb8" stroke-width="1.1"/></svg>
<div class="t" style="top:850.62px;font-size:13.5px;line-height:18px;letter-spacing:0.78px;color:#545381;left:1573.39px;width:40px;text-align:center;">id</div>
<div class="t" style="top:850.62px;font-size:13.5px;line-height:18px;letter-spacing:0.78px;color:#545381;left:1743.39px;width:400px;text-align:center;">file</div>
<div class="r" style="left:1535px;top:888px;width:740px;height:2px;background:#4b4a7e;"></div>
<svg class="r" style="left:1540px;top:901.7px;" width="7.5" height="4.5" viewBox="0 0 7.5 4.5"><path d="M0 0 H7.5 L3.75 4.5 Z" fill="#000"/></svg>
<div class="t" style="top:893.68px;font-size:16.5px;line-height:21px;letter-spacing:0.7px;color:#545381;left:1552.50px;">Notes</div>
<div class="r" style="left:2227px;top:897.5px;width:40px;height:11.5px;border-radius:6px;background:#4b4a7e;color:#fff;font-size:9px;font-weight:700;line-height:11.5px;text-align:center;">0</div>
<div class="r" style="left:1535px;top:924px;width:75px;height:28px;background:#efeef5;"></div>
<div class="r" style="left:1609px;top:924px;width:38px;height:28px;background:#efeef5;"></div>
<div class="r" style="left:1646px;top:924px;width:629px;height:28px;background:#efeef5;"></div>
<div class="r" style="left:1535px;top:924px;width:740px;height:1px;background:#aaaaaa;"></div>
<div class="r" style="left:1535px;top:951px;width:740px;height:1px;background:#aaaaaa;"></div>
<div class="r" style="left:1535px;top:924px;width:1px;height:28px;background:#aaaaaa;"></div>
<div class="r" style="left:1609px;top:924px;width:1px;height:28px;background:#aaaaaa;"></div>
<div class="r" style="left:1646px;top:924px;width:1px;height:28px;background:#aaaaaa;"></div>
<div class="r" style="left:2274px;top:924px;width:1px;height:28px;background:#aaaaaa;"></div>
<svg class="r" style="left:1565.5px;top:930.8px;" width="15" height="15" viewBox="0 0 15 15"><rect x="0.6" y="0.6" width="13.4" height="13.4" rx="0.8" fill="none" stroke="#6b6a9c" stroke-width="1.1"/><path d="M7.3 3.9 V10.7 M3.9 7.3 H10.7" stroke="#2b2a7a" stroke-width="1.6"/></svg>
<div class="t" style="top:929.62px;font-size:13.5px;line-height:18px;letter-spacing:0.78px;color:#545381;left:1607.89px;width:40px;text-align:center;">id</div>
<div class="t" style="top:929.62px;font-size:13.5px;line-height:18px;letter-spacing:0.78px;color:#545381;left:1760.39px;width:400px;text-align:center;">note</div></body></html>
